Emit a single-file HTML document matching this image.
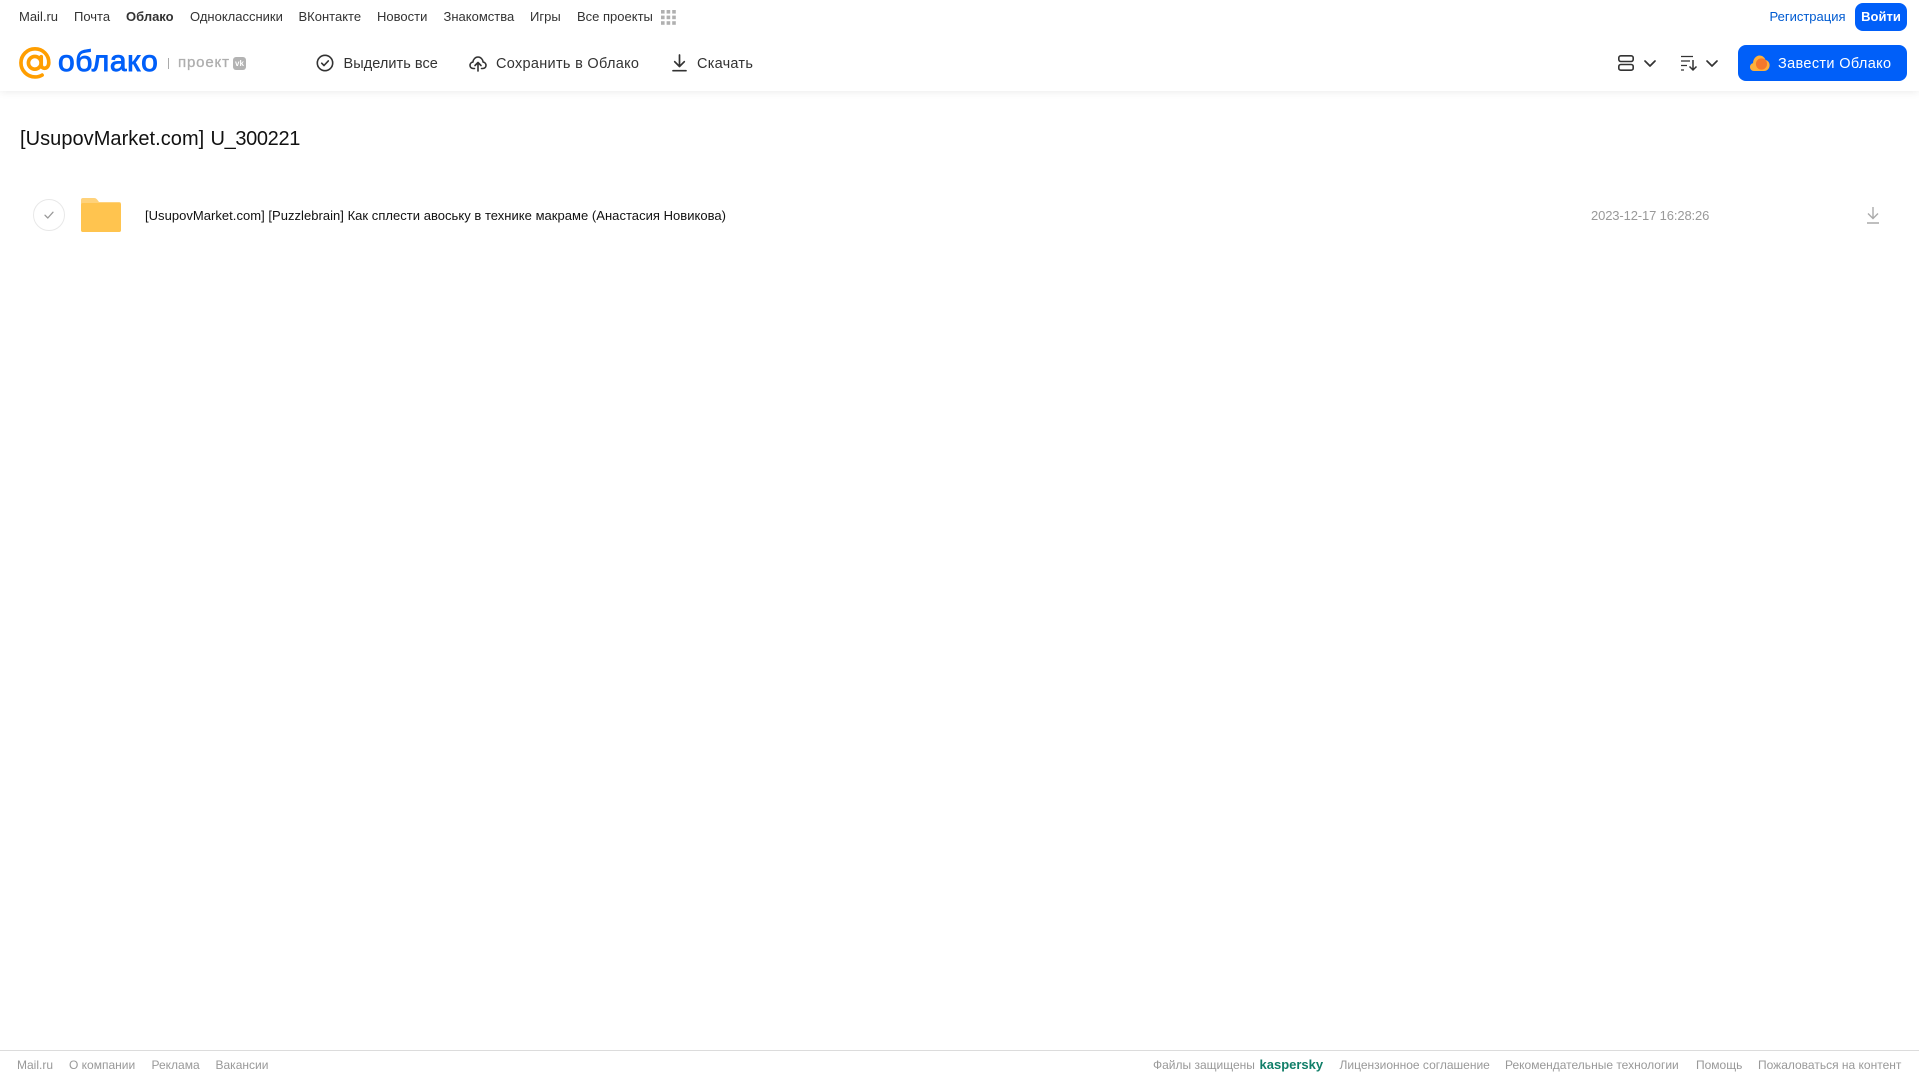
<!DOCTYPE html>
<html lang="ru"><head><meta charset="utf-8"><title>Облако</title>
<style>
html,body{margin:0;padding:0;background:#fff;width:1919px;height:1079px;overflow:hidden}
body{font-family:"Liberation Sans",Arial,sans-serif;position:relative}
.t{position:absolute;white-space:nowrap;line-height:20px;height:20px}
.n{top:7px;font-size:13px;color:#333}
.a{top:53.500px;font-size:14.500px;color:#333}
.f{top:1055px;font-size:12px;color:#999}
svg{position:absolute;overflow:visible}
</style></head><body>
<div style="position:absolute;left:0;top:0;width:1919px;height:91px;background:#fff;box-shadow:0 1px 8px rgba(0,0,0,.08)"></div>

<span class="t n" style="left:19px">Mail.ru</span>
<span class="t n" style="left:74px">Почта</span>
<span class="t n" style="left:126px;font-weight:700">Облако</span>
<span class="t n" style="left:190px">Одноклассники</span>
<span class="t n" style="left:298.500px">ВКонтакте</span>
<span class="t n" style="left:377px">Новости</span>
<span class="t n" style="left:443.500px">Знакомства</span>
<span class="t n" style="left:530px">Игры</span>
<span class="t n" style="left:577px">Все проекты</span>
<svg style="left:661px;top:10px" width="15" height="15" fill="#b0b0b0"><rect x="0" y="0" width="3.600" height="3.600"/><rect x="5.600" y="0" width="3.600" height="3.600"/><rect x="11.200" y="0" width="3.600" height="3.600"/><rect x="0" y="5.600" width="3.600" height="3.600"/><rect x="5.600" y="5.600" width="3.600" height="3.600"/><rect x="11.200" y="5.600" width="3.600" height="3.600"/><rect x="0" y="11.200" width="3.600" height="3.600"/><rect x="5.600" y="11.200" width="3.600" height="3.600"/><rect x="11.200" y="11.200" width="3.600" height="3.600"/></svg>

<span class="t" style="left:1769.500px;top:7px;font-size:13px;color:#005bd1">Регистрация</span>
<div style="position:absolute;left:1855px;top:3px;width:52px;height:28px;border-radius:8px;background:#005ff9;color:#fff;font-size:13px;font-weight:700;line-height:28px;text-align:center">Войти</div>

<svg style="left:19px;top:47px" width="32" height="32" viewBox="0 0 33 33" fill="none" stroke="#ff9e00" stroke-width="3.800" stroke-linecap="round"><circle cx="16.300" cy="16.300" r="6.600"/><path d="M22.900 10v8.300c0 5.200 7.600 5 7.800-2C31 8.200 24.500 1.900 16.500 1.900 8.500 1.900 2 8.400 2 16.400s6.500 14.500 14.500 14.500c3 0 5.400-.7 7.300-1.900"/></svg>
<span class="t" style="left:58px;top:47px;height:30px;line-height:30px;font-size:30px;color:#005ff9;letter-spacing:.6px;-webkit-text-stroke:.9px #005ff9">облако</span>
<div style="position:absolute;left:168px;top:58px;width:1px;height:11px;background:#aaa"></div>
<span class="t" style="left:178px;top:53px;font-size:15px;color:#aeaeae;letter-spacing:.85px;-webkit-text-stroke:.3px #aeaeae">проект</span>
<div style="position:absolute;left:233px;top:57px;width:13px;height:13px;border-radius:3px;background:#b3b3b3;color:#fff;font-size:8px;font-weight:700;line-height:13px;text-align:center">vk</div>

<svg style="left:316px;top:54px" width="18" height="18" viewBox="0 0 18 18" fill="none" stroke="#333" stroke-width="1.600"><circle cx="9" cy="9" r="7.700"/><path d="M5.700 9.200l2.300 2.300 4.300-4.600" stroke-linecap="round" stroke-linejoin="round"/></svg>
<span class="t a" style="left:343.500px;letter-spacing:.05px">Выделить все</span>
<svg style="left:469px;top:54px" width="18" height="18" viewBox="0 0 18 18" fill="none" stroke="#333" stroke-width="1.600" stroke-linecap="round" stroke-linejoin="round"><path d="M5.500 14.500H4.300C2.300 14.500 1 13 1 11.300c0-1.700 1.300-3 2.900-3.200C4.200 5.300 6.300 3 9 3s4.800 2.300 5.100 5.100c1.600.2 2.900 1.500 2.900 3.200 0 1.700-1.300 3.200-3.300 3.200h-1.200"/><path d="M9 17V9M6 11.500L9 8.500l3 3"/></svg>
<span class="t a" style="left:496px;letter-spacing:.3px">Сохранить в Облако</span>
<svg style="left:672px;top:54px" width="15" height="18" viewBox="0 0 15 18" fill="none" stroke="#333" stroke-width="1.700" stroke-linecap="round" stroke-linejoin="round"><path d="M7.500 1v11M2.700 7.700l4.800 4.800 4.800-4.800M1 16.700h13"/></svg>
<span class="t a" style="left:697px;letter-spacing:.25px">Скачать</span>

<svg style="left:1618px;top:55px" width="16" height="16" viewBox="0 0 16 16" fill="none" stroke="#333" stroke-width="1.600"><rect x=".8" y=".8" width="14.400" height="5.700" rx="2"/><rect x=".8" y="9.500" width="14.400" height="5.700" rx="2"/></svg>
<svg style="left:1644px;top:60px" width="12" height="7" viewBox="0 0 12 7" fill="none" stroke="#333" stroke-width="1.700" stroke-linecap="round" stroke-linejoin="round"><path d="M1 1l5 5 5-5"/></svg>
<svg style="left:1681px;top:55px" width="17" height="16" viewBox="0 0 17 16" fill="none" stroke="#333" stroke-width="1.300"><path d="M0 1.500h12M0 6h9M0 10.500h6M0 15h3"/><path d="M12 5v10M8.500 11.500l3.500 3.500 3.500-3.500" stroke-width="1.500"/></svg>
<svg style="left:1706px;top:60px" width="12" height="7" viewBox="0 0 12 7" fill="none" stroke="#333" stroke-width="1.700" stroke-linecap="round" stroke-linejoin="round"><path d="M1 1l5 5 5-5"/></svg>

<div style="position:absolute;left:1738px;top:45px;width:169px;height:36px;border-radius:8px;background:#005ff9"></div>
<svg style="left:1750px;top:54px" width="20" height="18" viewBox="0 0 20 18"><path d="M4 17C1.800 17 0 15.300 0 13c0-1.900 1.300-3.500 3-3.900C3.200 5 6 1.500 9.500 1.500c3 0 5.300 2 6 4.500 2.300.4 4.100 2.500 4.100 5.200 0 3.200-2.400 5.800-5.600 5.800z" fill="#ffb03a"/><circle cx="11.500" cy="10" r="5.600" fill="#f4782c"/></svg>
<span class="t" style="left:1778px;top:53.500px;font-size:14.500px;color:#fff;letter-spacing:.35px">Завести Облако</span>

<span class="t" style="left:20px;top:126.500px;height:24px;line-height:24px;font-size:20px;color:#111;letter-spacing:.05px">[UsupovMarket.com]</span>
<span class="t" style="left:210.500px;top:126.500px;height:24px;line-height:24px;font-size:20px;color:#111;letter-spacing:-.35px">U_300221</span>

<div style="position:absolute;left:33px;top:199px;width:30px;height:30px;border:1px solid #e8e8e8;border-radius:50%"></div>
<svg style="left:44px;top:211px" width="10" height="8" viewBox="0 0 10 8" fill="none" stroke="#999" stroke-width="1.300" stroke-linecap="round" stroke-linejoin="round"><path d="M1 4.200l2.800 2.800L9 1.200"/></svg>
<svg style="left:81px;top:198px" width="40" height="34" viewBox="0 0 40 34"><path d="M2 0h11c1.500 0 2.300.6 3.300 1.700L18 4h20a2 2 0 0 1 2 2v26a2 2 0 0 1-2 2H2a2 2 0 0 1-2-2V2a2 2 0 0 1 2-2z" fill="#ffd27a"/><path d="M2 5h36a2 2 0 0 1 2 2v25a2 2 0 0 1-2 2H2a2 2 0 0 1-2-2V7a2 2 0 0 1 2-2z" fill="#ffc44f"/></svg>
<span class="t" style="left:145px;top:206px;font-size:13px;color:#111;letter-spacing:.03px">[UsupovMarket.com] [Puzzlebrain] Как сплести авоську в технике макраме (Анастасия Новикова)</span>
<span class="t" style="left:1591px;top:206px;font-size:13px;color:#999;letter-spacing:-.13px">2023-12-17 16:28:26</span>
<svg style="left:1866px;top:207px" width="14" height="17" viewBox="0 0 14 17" fill="none" stroke="#aaa" stroke-width="1.400"><path d="M7 0v11M2 6.500L7 11.500l5-5M1 16h12"/></svg>

<div style="position:absolute;left:0;top:1050px;width:1919px;height:1px;background:#dcdcdc"></div>
<span class="t f" style="left:17px">Mail.ru</span>
<span class="t f" style="left:69px">О компании</span>
<span class="t f" style="left:151.500px">Реклама</span>
<span class="t f" style="left:215.500px">Вакансии</span>
<span class="t f" style="left:1153px">Файлы защищены</span>
<span class="t f" style="left:1259.500px;font-size:13px;font-weight:700;color:#107e68">kaspersky</span>
<span class="t f" style="left:1339.500px">Лицензионное соглашение</span>
<span class="t f" style="left:1505px">Рекомендательные технологии</span>
<span class="t f" style="left:1696px">Помощь</span>
<span class="t f" style="left:1758px">Пожаловаться на контент</span>
</body></html>
